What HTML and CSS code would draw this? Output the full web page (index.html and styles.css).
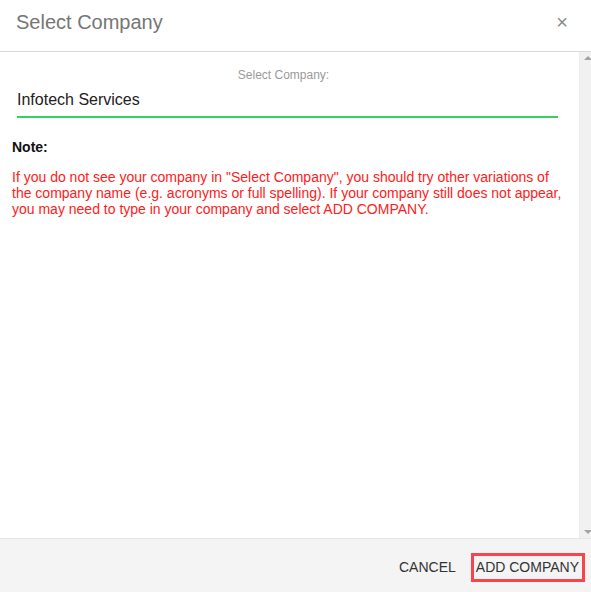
FILE: index.html
```html
<!DOCTYPE html>
<html>
<head>
<meta charset="utf-8">
<link rel="stylesheet" href="styles.css">
</head>
<body>
<div class="modal">
  <div class="header">
    <div class="title">Select Company</div>
    <div class="close">&#215;</div>
  </div>
  <div class="main">
    <div class="content">
      <div class="field-label">Select Company:</div>
      <div class="field-input">Infotech Services</div>
      <div class="note-title">Note:</div>
      <p class="note-text">If you do not see your company in "Select Company", you should try other variations of the company name (e.g. acronyms or full spelling). If your company still does not appear, you may need to type in your company and select ADD COMPANY.</p>
    </div>
    <div class="scrollbar">
      <div class="arrow-up"></div>
      <div class="arrow-down"></div>
    </div>
  </div>
  <div class="footer">
    <div class="btn">CANCEL</div>
    <div class="btn btn-primary">ADD COMPANY</div>
  </div>
</div>
</body>
</html>
```

FILE: styles.css
```css
html, body {
  margin: 0;
  padding: 0;
  background: #fff;
}
body {
  font-family: "Liberation Sans", Arial, sans-serif;
  width: 591px;
  height: 592px;
  overflow: hidden;
}
.modal {
  display: flex;
  flex-direction: column;
  height: 592px;
}
.header {
  height: 51px;
  border-bottom: 1px solid #d9d9d9;
  display: flex;
  align-items: center;
  justify-content: space-between;
  padding: 0 23px 0 16px;
}
.title {
  font-size: 20px;
  color: #767676;
  line-height: 24px;
  margin-top: -7px;
}
.close {
  font-size: 20px;
  color: #8a8a8a;
  line-height: 20px;
  margin-top: -8px;
}
.main {
  flex: 1;
  display: flex;
  min-height: 0;
}
.content {
  flex: 1;
  padding: 15px 12px 0 12px;
}
.field-label {
  font-size: 12px;
  line-height: 16px;
  color: #9a9a9a;
  text-align: center;
  padding-right: 12px;
}
.field-input {
  margin: 7px 9px 0 5px;
  font-size: 16px;
  line-height: 20px;
  color: #222;
  padding-bottom: 6px;
  border-bottom: 2px solid #33d15f;
}
.note-title {
  margin-top: 21px;
  font-size: 14px;
  line-height: 16px;
  font-weight: bold;
  color: #111;
}
.note-text {
  margin: 14px 0 0 0;
  font-size: 14px;
  line-height: 16px;
  color: #ff2020;
}
.scrollbar {
  width: 11px;
  background: #f1f1f1;
  position: relative;
  border-left: 1px solid #ececec;
}
.arrow-up, .arrow-down {
  position: absolute;
  left: 4px;
  width: 0;
  height: 0;
  border-left: 4px solid transparent;
  border-right: 4px solid transparent;
}
.arrow-up {
  top: 4px;
  border-bottom: 4px solid #a3a3a3;
}
.arrow-down {
  bottom: 4px;
  border-top: 4px solid #a3a3a3;
}
.footer {
  height: 54px;
  box-sizing: border-box;
  background: #f4f4f4;
  border-top: 1px solid #e6e6e6;
  display: flex;
  align-items: flex-end;
  justify-content: flex-end;
  padding: 0 6px 10px 0;
  gap: 15px;
}
.btn {
  font-size: 14px;
  line-height: 15px;
  color: #333;
  padding: 7px 0;
}
.btn-primary {
  border: 3px solid #f8444a;
  padding: 4px 3px 4px 2px;
}
```
